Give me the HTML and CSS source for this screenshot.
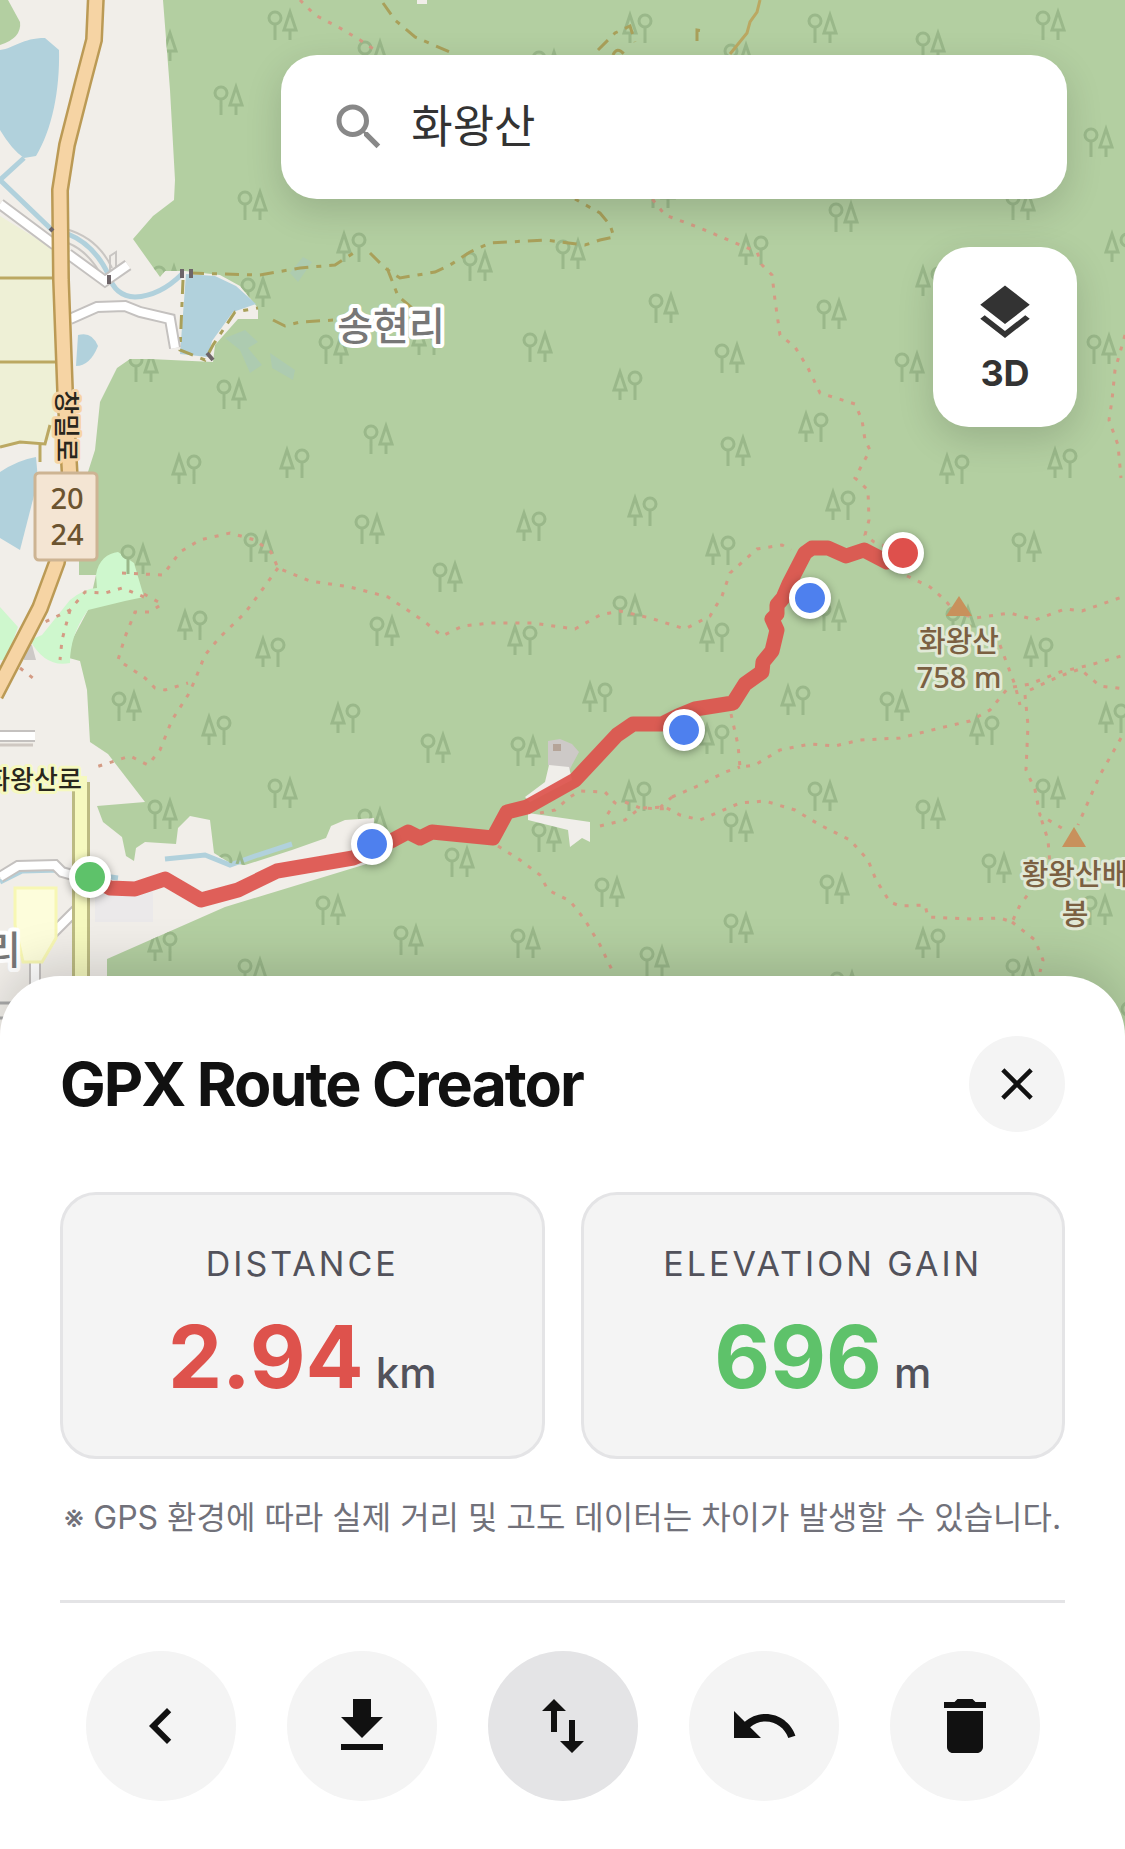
FILE: index.html
```html
<!DOCTYPE html>
<html lang="ko">
<head>
<meta charset="utf-8">
<meta name="viewport" content="width=device-width, initial-scale=1">
<title>GPX Route Creator</title>
<link rel="stylesheet" href="styles.css">
</head>
<body>
<main class="app">
  <section class="map" aria-label="지도">
    <svg class="map-canvas" viewBox="0 0 1125 1036" preserveAspectRatio="xMidYMin slice" role="img" aria-label="화왕산 등산 경로">
      <defs>
        <g id="ot"><circle cx="8" cy="8" r="6"/><path d="M8 14V30M23 2L17 20H29ZM23 20V30"/></g>
        <g id="to"><circle cx="23" cy="8" r="6"/><path d="M23 14V30M8 2L2 20H14ZM8 20V30"/></g>
        <path id="woods" d="M163 0L170 90L175 180L174 200L153 216L133 239L160 277L165 271L185 271L220 275L240 286L258 308V319H238L215 345L213 362L150 359H130L117 368L100 402L95 450L79 500V575H96L88 610L72 640L69 658L80 661L87 690L90 742L108 754L145 802L97 806L103 822L122 837L126 856L134 861L136 848L145 842L176 844L178 828L190 816L210 820L214 853L230 863L245 865L292 850L326 838L331 826L345 820L374 818L373 862L225 907L107 959V1036H1125V0Z"/>
        <clipPath id="woods-clip"><use href="#woods"/></clipPath>
      </defs>

      <rect class="land" width="1125" height="1036"/>
      <path class="farm" d="M0 216L55 250L57 400L50 440L0 447Z"/>
      <use class="wood" href="#woods"/>
      <path class="wood" d="M0 0H8L20 22Q22 38 0 45Z"/>
      <path class="park" d="M96 575C98 560 108 553 118 552L134 563L144 597L125 601L88 610C75 628 70 645 70 663Q45 668 30 640L42 635L70 600Q85 588 97 588Z"/>
      <path class="park" d="M0 607L18 627L6 660H0Z"/>
      <path class="water" d="M0 50C15 48 22 38 45 38L59 50C60 90 52 130 36 156L24 158Q12 150 0 130Z"/>
      <path class="water" d="M186 274L215 276L236 286L256 304L233 312L212 341L208 357L180 354Z"/>
      <path class="water" d="M78 335Q92 331 98 346Q90 366 76 366Z"/>
      <path class="water" d="M0 472Q18 460 36 457L38 480L20 550L0 538Z"/>
      <path class="marsh" d="M225 338L245 330L258 342L248 348L262 365L250 373L240 350ZM270 353L295 370L293 380L272 368ZM290 273L303 257L312 262L298 282Z"/>
      <path class="stream" d="M24 158L0 180L52 230M68 234Q95 245 109 276Q115 296 135 297Q160 296 182 274M0 882L22 871L60 870L118 878M165 859L205 855L230 865L258 855L292 844"/>

      <g class="trees" clip-path="url(#woods-clip)">
        <use href="#ot" x="147" y="31"/><use href="#ot" x="267" y="10"/><use href="#ot" x="213" y="85"/><use href="#ot" x="357" y="40"/>
        <use href="#ot" x="237" y="190"/><use href="#ot" x="240" y="277"/><use href="#ot" x="318" y="334"/><use href="#ot" x="216" y="379"/>
        <use href="#ot" x="363" y="424"/><use href="#ot" x="128" y="352"/><use href="#ot" x="151" y="265"/><use href="#to" x="336" y="232"/>
        <use href="#to" x="171" y="454"/><use href="#to" x="279" y="448"/><use href="#ot" x="120" y="544"/><use href="#ot" x="243" y="532"/>
        <use href="#ot" x="354" y="514"/><use href="#ot" x="111" y="691"/><use href="#ot" x="267" y="778"/><use href="#ot" x="147" y="799"/>
        <use href="#ot" x="357" y="808"/><use href="#ot" x="315" y="895"/><use href="#ot" x="237" y="958"/><use href="#ot" x="217" y="853"/>
        <use href="#to" x="177" y="610"/><use href="#to" x="255" y="637"/><use href="#to" x="201" y="715"/><use href="#to" x="330" y="703"/>
        <use href="#to" x="147" y="931"/><use href="#ot" x="531" y="50"/><use href="#ot" x="462" y="251"/><use href="#ot" x="555" y="239"/>
        <use href="#ot" x="648" y="293"/><use href="#ot" x="522" y="332"/><use href="#to" x="411" y="325"/><use href="#ot" x="645" y="178"/>
        <use href="#to" x="622" y="13"/><use href="#to" x="612" y="370"/><use href="#ot" x="807" y="13"/><use href="#ot" x="915" y="31"/>
        <use href="#ot" x="1035" y="10"/><use href="#ot" x="1083" y="127"/><use href="#ot" x="828" y="202"/><use href="#ot" x="723" y="43"/>
        <use href="#ot" x="1005" y="190"/><use href="#ot" x="816" y="299"/><use href="#ot" x="714" y="343"/><use href="#ot" x="894" y="352"/>
        <use href="#ot" x="1086" y="334"/><use href="#ot" x="720" y="436"/><use href="#to" x="738" y="235"/><use href="#to" x="915" y="266"/>
        <use href="#to" x="1104" y="232"/><use href="#to" x="798" y="412"/><use href="#to" x="939" y="454"/><use href="#to" x="1047" y="448"/>
        <use href="#ot" x="432" y="562"/><use href="#ot" x="369" y="616"/><use href="#ot" x="420" y="733"/><use href="#ot" x="510" y="736"/>
        <use href="#ot" x="612" y="595"/><use href="#ot" x="444" y="847"/><use href="#ot" x="594" y="877"/><use href="#ot" x="723" y="913"/>
        <use href="#ot" x="510" y="928"/><use href="#ot" x="393" y="925"/><use href="#ot" x="639" y="946"/><use href="#ot" x="531" y="822"/>
        <use href="#ot" x="723" y="812"/><use href="#to" x="516" y="511"/><use href="#to" x="627" y="496"/><use href="#to" x="705" y="535"/>
        <use href="#to" x="507" y="625"/><use href="#to" x="699" y="622"/><use href="#to" x="582" y="682"/><use href="#to" x="621" y="781"/>
        <use href="#to" x="699" y="724"/><use href="#ot" x="1011" y="532"/><use href="#ot" x="816" y="601"/><use href="#ot" x="879" y="691"/>
        <use href="#ot" x="807" y="781"/><use href="#ot" x="915" y="799"/><use href="#ot" x="1035" y="778"/><use href="#ot" x="981" y="853"/>
        <use href="#ot" x="819" y="874"/><use href="#ot" x="1005" y="958"/><use href="#ot" x="1082" y="895"/><use href="#ot" x="829" y="971"/>
        <use href="#ot" x="945" y="606"/><use href="#to" x="825" y="490"/><use href="#to" x="780" y="685"/><use href="#to" x="1023" y="637"/>
        <use href="#to" x="969" y="715"/><use href="#to" x="1098" y="703"/><use href="#to" x="915" y="928"/><use href="#ot" x="1120" y="1001"/>
      </g>

      <g class="trail">
        <path d="M122 573L163 575L180 552L200 540L230 533L255 540L271 552L278 568L310 581L350 587L388 597L425 622L442 636L463 626L490 623H532L575 629L600 615L620 611L650 618L685 629L710 616L722 596L730 573L757 549L782 545L791 550"/>
        <path d="M278 568L262 590L245 613L220 637L205 655L195 680L188 695L172 720L160 750L148 765L130 756L93 768"/>
        <path d="M144 594L162 604L150 612L135 612L125 637L118 660L145 678L155 688L165 690L188 683"/>
        <path d="M144 597L122 588L105 593L85 592L70 610L45 622M70 610L62 640L60 660M20 668L38 682"/>
        <path d="M300 0L315 15L340 28L360 40L378 52M645 190L665 215L700 228L733 242L757 252L762 265L772 275L775 300L780 335L795 347L808 368L820 393L855 404L862 420L865 440L870 450L855 478L868 490L869 520L865 535L874 542L890 548"/>
        <path d="M907 576L930 587L945 600L955 612L975 618L1010 613L1035 620L1065 609L1082 611L1125 596"/>
        <path d="M1125 335L1115 370L1112 400L1109 420L1118 445L1121 478"/>
        <path d="M731 714L738 745L740 767L755 765L780 750L810 744L835 746L860 740L900 738L940 728L970 721L990 710L1008 688L1030 684L1060 672L1090 665L1125 655"/>
        <path d="M1000 645L1015 685L1020 705M1030 690L1060 676L1080 669L1100 686L1125 689M1025 695L1028 725L1026 770L1035 790L1040 815L1065 830M1121 738L1100 775L1078 825"/>
        <path d="M498 846L520 860L540 875L548 890L570 901L585 920L600 945L612 970"/>
        <path d="M540 813L555 810L570 797L580 791L605 792L615 803L607 815M672 797L700 785L725 772L740 767M600 826L625 820L640 808L665 807L680 815L700 820L740 803L765 801L795 810L820 825L850 840L868 860L876 880L890 902L900 906L925 905L928 917L970 919L1000 918L1012 922L1020 905L1050 865L1048 840L1040 815M1012 922L1035 940L1043 960L1040 972M625 802L640 808L670 809M672 797L655 812"/>
      </g>
      <g class="track">
        <path d="M190 273L260 275L300 268L335 265L358 250M370 253L385 268L400 278L435 272L450 265L470 252L490 243L545 240L585 245L600 240L614 237L610 225L600 213L575 199M387 268L398 296L412 308M273 320L285 326L300 322L335 320"/>
        <path d="M383 3L395 20L415 37L450 52M598 50L615 33L630 26L635 42M613 55Q617 46 624 54M697 41V30L704 31M183 280L180 350L205 360L213 345L235 312L258 308"/>
      </g>
      <path class="lane" d="M760 0L757 12L750 22L747 33L730 54M0 278H57M0 362H60M0 447L20 442L45 444L50 425M40 444V462"/>
      <rect class="land" x="417" y="0" width="10" height="4"/>

      <path class="rock" d="M548 741L560 739L572 744L579 752L572 765L567 775L548 765Z"/>
      <path class="pale" d="M549 765L569 767L572 780L530 802L525 797L545 782ZM528 813L590 822V842L582 838L570 847L568 830L528 820Z"/>
      <rect class="brown" x="553" y="744" width="8" height="7"/>
      <path class="rock" d="M22 645H32L36 660H24Z"/>
      <rect class="shade" x="95" y="888" width="58" height="34"/>
      <path class="shade" d="M0 745H33"/>

      <path class="footway" d="M66 229Q98 238 112 268M68 243Q90 252 104 280M110 272V256L116 252V270"/>
      <g class="road-edge"><path d="M0 204L55 245M68 254L105 281L128 265M70 319L97 307L125 306L140 312L170 319L175 348"/><path d="M0 877L18 866L55 865L62 872L76 876M76 910L42 944L35 960V985M0 736H35"/></g>
      <g class="road-fill"><path d="M0 204L55 245M68 254L105 281L128 265M70 319L97 307L125 306L140 312L170 319L175 348"/><path d="M0 877L18 866L55 865L62 872L76 876M76 910L42 944L35 960V985M0 736H35"/></g>
      <path class="plot" d="M15 888H56V938L42 962H23L15 925Z"/>
      <path class="rail" d="M0 1003H40M0 1018H40"/>
      <path class="minor-edge" d="M81 782V1036"/>
      <path class="minor-fill" d="M81 776V1036"/>
      <path class="main-edge" d="M96 -5L94 40L83 82L67 145L60 190L61 280L65 390L70 480L57 562L40 608L-5 695"/>
      <path class="main-fill" d="M96 -5L94 40L83 82L67 145L60 190L61 280L65 390L70 480L57 562L40 608L-5 695"/>

      <path class="node" d="M182 269V278M191 269V278M50 231L53 228M109 275V284M207 353L213 360"/>
      <rect class="shield" x="35" y="473" width="62" height="87" rx="4"/>
      <g class="shield-text"><text x="67" y="509">20</text><text x="67" y="545">24</text></g>
      <text class="road-name orange" transform="translate(57 426) rotate(90)">창밀로</text>
      <text class="road-name yellow" x="34" y="789">화왕산로</text>
      <text class="place" x="391" y="340">송현리</text>
      <text class="place" x="3" y="964">리</text>

      <g class="peak"><path d="M959 596L972 616H946Z"/><path d="M1074 827L1086 847H1062Z"/></g>
      <g class="peak-name">
        <text x="959" y="652">화왕산</text><text x="959" y="688">758 m</text>
        <text x="1075" y="885">황왕산배</text><text x="1075" y="925">봉</text>
      </g>

      <path class="route" d="M90 877L110 888L135 889L165 879L201 900L238 890L277 871L353 858L372 850L393 840L408 832L420 838L432 832L493 838L507 812L527 807L575 780L617 735L633 724H662L678 716L695 709L733 703L745 684L762 672L763 662L772 651L777 630L772 619L777 614V605L783 598L789 584L805 553L812 548H828L846 556L864 550L887 562L903 553"/>
      <g class="pins">
        <circle class="pin-start" cx="90" cy="877" r="18"/>
        <circle class="pin-via" cx="372" cy="844" r="18"/>
        <circle class="pin-via" cx="684" cy="730" r="18"/>
        <circle class="pin-via" cx="810" cy="598" r="18"/>
        <circle class="pin-end" cx="903" cy="553" r="18"/>
      </g>
    </svg>

    <div class="map-controls">
      <label class="search">
        <svg class="search-icon" viewBox="0 0 24 24" aria-hidden="true"><path d="M15.5 14h-.79l-.28-.27A6.47 6.47 0 0 0 16 9.500 6.500 6.500 0 1 0 9.500 16c1.610 0 3.090-.59 4.230-1.570l.27.28v.79l5 4.990L20.490 19l-4.990-5zm-6 0C7.010 14 5 11.990 5 9.500S7.010 5 9.500 5 14 7.010 14 9.500 11.990 14 9.500 14z"/></svg>
        <input class="search-input" type="text" value="화왕산" aria-label="장소 검색">
      </label>
      <button class="layer-button" type="button">
        <svg class="layer-icon" viewBox="0 0 24 24" aria-hidden="true"><path d="M11.990 18.540l-7.370-5.730L3 14.070l9 7 9-7-1.630-1.270-7.380 5.740zM12 16l7.360-5.730L21 9l-9-7-9 7 1.630 1.270L12 16z"/></svg>
        <span>3D</span>
      </button>
    </div>
  </section>

  <section class="sheet" aria-labelledby="sheet-title">
    <header class="sheet-header">
      <h1 class="sheet-title" id="sheet-title">GPX Route Creator</h1>
      <button class="close-button" type="button" aria-label="닫기">
        <svg viewBox="0 0 24 24" aria-hidden="true"><path d="M19 6.410L17.590 5 12 10.590 6.410 5 5 6.410 10.590 12 5 17.590 6.410 19 12 13.410 17.590 19 19 17.590 13.410 12z"/></svg>
      </button>
    </header>
    <dl class="stats">
      <div class="stat">
        <dt class="stat-label">DISTANCE</dt>
        <dd class="stat-value"><span class="number distance">2.94</span><span class="unit">km</span></dd>
      </div>
      <div class="stat">
        <dt class="stat-label">ELEVATION GAIN</dt>
        <dd class="stat-value"><span class="number gain">696</span><span class="unit">m</span></dd>
      </div>
    </dl>
    <p class="note">※ GPS 환경에 따라 실제 거리 및 고도 데이터는 차이가 발생할 수 있습니다.</p>
    <div class="actions">
      <button class="action" type="button" aria-label="이전"><svg viewBox="0 0 24 24" aria-hidden="true"><path d="M15.410 7.410L14 6l-6 6 6 6 1.410-1.410L10.830 12z"/></svg></button>
      <button class="action" type="button" aria-label="다운로드"><svg viewBox="0 0 24 24" aria-hidden="true"><path d="M19 9h-4V3H9v6H5l7 7 7-7zM5 18v2h14v-2H5z"/></svg></button>
      <button class="action active" type="button" aria-label="방향 전환" aria-pressed="true"><svg viewBox="0 0 24 24" aria-hidden="true"><path d="M16 17.010V10h-2v7.010h-3L15 21l4-3.990h-3zM9 3L5 6.990h3V14h2V6.990h3L9 3z"/></svg></button>
      <button class="action" type="button" aria-label="실행 취소"><svg viewBox="0 0 24 24" aria-hidden="true"><path d="M12.500 8c-2.650 0-5.050.99-6.900 2.600L2 7v9h9l-3.620-3.620c1.390-1.160 3.160-1.880 5.120-1.880 3.540 0 6.550 2.310 7.600 5.500l2.370-.78C21.080 11.030 17.150 8 12.500 8z"/></svg></button>
      <button class="action" type="button" aria-label="삭제"><svg viewBox="0 0 24 24" aria-hidden="true"><path d="M6 19c0 1.100.9 2 2 2h8c1.100 0 2-.9 2-2V7H6v12zM19 4h-3.500l-1-1h-5l-1 1H5v2h14V4z"/></svg></button>
    </div>
  </section>
</main>
</body>
</html>
```
FILE: styles.css
```css
* { box-sizing: border-box; }

body {
  margin: 0;
  background: #fff;
  color: #111;
  font-family: Inter, "Noto Sans CJK KR", sans-serif;
}

button {
  margin: 0;
  padding: 0;
  border: 0;
  color: inherit;
  font: inherit;
  cursor: pointer;
}

button svg { display: block; fill: currentColor; }

.app {
  display: flex;
  flex-direction: column;
  min-height: 100vh;
}

/* Map */
.map {
  position: relative;
  flex: 1;
  min-height: 560px;
  overflow: hidden;
}

.map-canvas {
  position: absolute;
  inset: 0;
  width: 100%;
  height: 100%;
}

.land { fill: #f1eee9; }
.farm { fill: #eef0d6; }
.wood { fill: #b3cfa1; }
.park { fill: #cef7cd; }
.water { fill: #b1d1dc; }
.marsh { fill: #adcbb0; }
.rock { fill: #cdc9c7; }
.pale { fill: #f0eeea; }
.brown { fill: #b5a498; }
.shade { fill: #ebe9ea; }
path.shade { stroke: #cfc8c2; stroke-width: 3; }
.stream { fill: none; stroke: #b1d1dc; stroke-width: 5; }
.trees { fill: none; stroke: #9ab88a; stroke-width: 3; }

.trail {
  fill: none;
  stroke: #d49b84;
  stroke-width: 3;
  stroke-dasharray: 4 8;
}

.track {
  fill: none;
  stroke: #a9a05a;
  stroke-width: 3;
  stroke-dasharray: 14 8 5 8;
}

.lane { fill: none; stroke: #bba862; stroke-width: 3; }
.footway { fill: none; stroke: #c9c6c3; stroke-width: 2; }
.road-edge { fill: none; stroke: #c4c1bf; stroke-width: 12; }
.road-fill { fill: none; stroke: #fff; stroke-width: 8; }
.plot { fill: #fdfddb; stroke: #f7f7b4; stroke-width: 3; }
.rail { stroke: #aaa; stroke-width: 3; }
.minor-edge { fill: none; stroke: #bcbb82; stroke-width: 18; }
.minor-fill { fill: none; stroke: #f6f9bf; stroke-width: 12; }
.main-edge { fill: none; stroke: #bb9a55; stroke-width: 18; }
.main-fill { fill: none; stroke: #f6d4a4; stroke-width: 13; }
.node { stroke: #6d6468; stroke-width: 4; }
.shield { fill: #f4e5d3; stroke: #cdb493; stroke-width: 3; }

.map-canvas text {
  font-family: "Noto Sans", "Noto Sans CJK KR", sans-serif;
  font-weight: 500;
  text-anchor: middle;
  paint-order: stroke;
  stroke-linejoin: round;
}

.shield-text { fill: #6b5430; font-size: 29px; }
.road-name { fill: #29261c; font-size: 26px; stroke-width: 6; }
.road-name.orange { stroke: #f6d4a4; }
.road-name.yellow { stroke: #f6f9bf; }
.place { fill: #777; font-size: 39px; stroke: #fff; stroke-width: 8; }
.peak { fill: #c8915c; }
.peak-name { fill: #7b6042; font-size: 29px; stroke: #e1e9d6; stroke-width: 6; }

.route {
  fill: none;
  stroke: #dd524c;
  stroke-opacity: .92;
  stroke-width: 15;
  stroke-linejoin: round;
}

.pins {
  stroke: #fff;
  stroke-width: 6;
  filter: drop-shadow(0 2px 4px rgba(0, 0, 0, .35));
}

.pin-start { fill: #5ec26a; }
.pin-via { fill: #4e80ee; }
.pin-end { fill: #de504c; }

.map-controls {
  position: relative;
  display: flex;
  flex-direction: column;
  align-items: flex-end;
  gap: 48px;
  padding: 55px 48px 0 25%;
}

.search {
  display: flex;
  align-items: center;
  gap: 22px;
  align-self: stretch;
  height: 144px;
  margin-right: 10px;
  padding: 0 48px;
  border-radius: 36px;
  background: #fff;
  box-shadow: 0 12px 36px rgba(0, 0, 0, .15);
}

.search-icon {
  flex: none;
  width: 60px;
  height: 60px;
  fill: #888;
}

.search-input {
  flex: 1;
  min-width: 0;
  padding: 0;
  border: 0;
  outline: 0;
  background: none;
  color: #333;
  font: 45px/60px Inter, "Noto Sans CJK KR", sans-serif;
}

.layer-button {
  display: flex;
  flex-direction: column;
  align-items: center;
  justify-content: center;
  gap: 6px;
  width: 144px;
  height: 180px;
  border-radius: 36px;
  background: #fff;
  box-shadow: 0 12px 36px rgba(0, 0, 0, .15);
  color: #333;
  font-size: 36px;
  font-weight: 700;
  line-height: 42px;
}

.layer-icon { width: 66px; height: 66px; }

/* Bottom sheet */
.sheet {
  position: relative;
  margin-top: -60px;
  padding: 60px 60px 48px;
  border-radius: 60px 60px 0 0;
  background: #fff;
  box-shadow: 0 -12px 48px rgba(0, 0, 0, .15);
}

.sheet-header {
  display: flex;
  align-items: center;
  justify-content: space-between;
  margin-bottom: 60px;
}

.sheet-title {
  margin: 0;
  font-size: 61px;
  font-weight: 700;
  line-height: 72px;
  letter-spacing: -2px;
}

.close-button {
  display: grid;
  place-items: center;
  width: 96px;
  height: 96px;
  border-radius: 50%;
  background: #f4f4f4;
}

.close-button svg { width: 54px; height: 54px; }

.stats {
  display: grid;
  grid-template-columns: 1fr 1fr;
  gap: 36px;
  margin: 0;
}

.stat {
  padding: 48px 24px;
  border: 3px solid #e4e4e6;
  border-radius: 36px;
  background: #f4f4f4;
  text-align: center;
}

.stat-label {
  margin-bottom: 21px;
  color: #52525b;
  font-size: 34px;
  line-height: 42px;
  letter-spacing: 3px;
}

.stat-value {
  display: flex;
  align-items: baseline;
  justify-content: center;
  gap: 12px;
  margin: 0;
  line-height: 102px;
}

.number { font-size: 86px; font-weight: 700; }
.distance { color: #de524c; }
.gain { color: #5ec26a; }

.unit {
  color: #52525b;
  font-size: 42px;
  font-weight: 500;
  line-height: 42px;
}

.note {
  margin: 36px 0 60px;
  color: #71717a;
  font-size: 32px;
  line-height: 45px;
  text-align: center;
}

.actions {
  display: grid;
  grid-template-columns: repeat(5, 1fr);
  justify-items: center;
  padding-top: 48px;
  border-top: 3px solid #e4e4e6;
}

.action {
  display: grid;
  place-items: center;
  width: 150px;
  height: 150px;
  border-radius: 50%;
  background: #f4f4f4;
}

.action.active { background: #e4e4e6; }
.action svg { width: 72px; height: 72px; }
```
